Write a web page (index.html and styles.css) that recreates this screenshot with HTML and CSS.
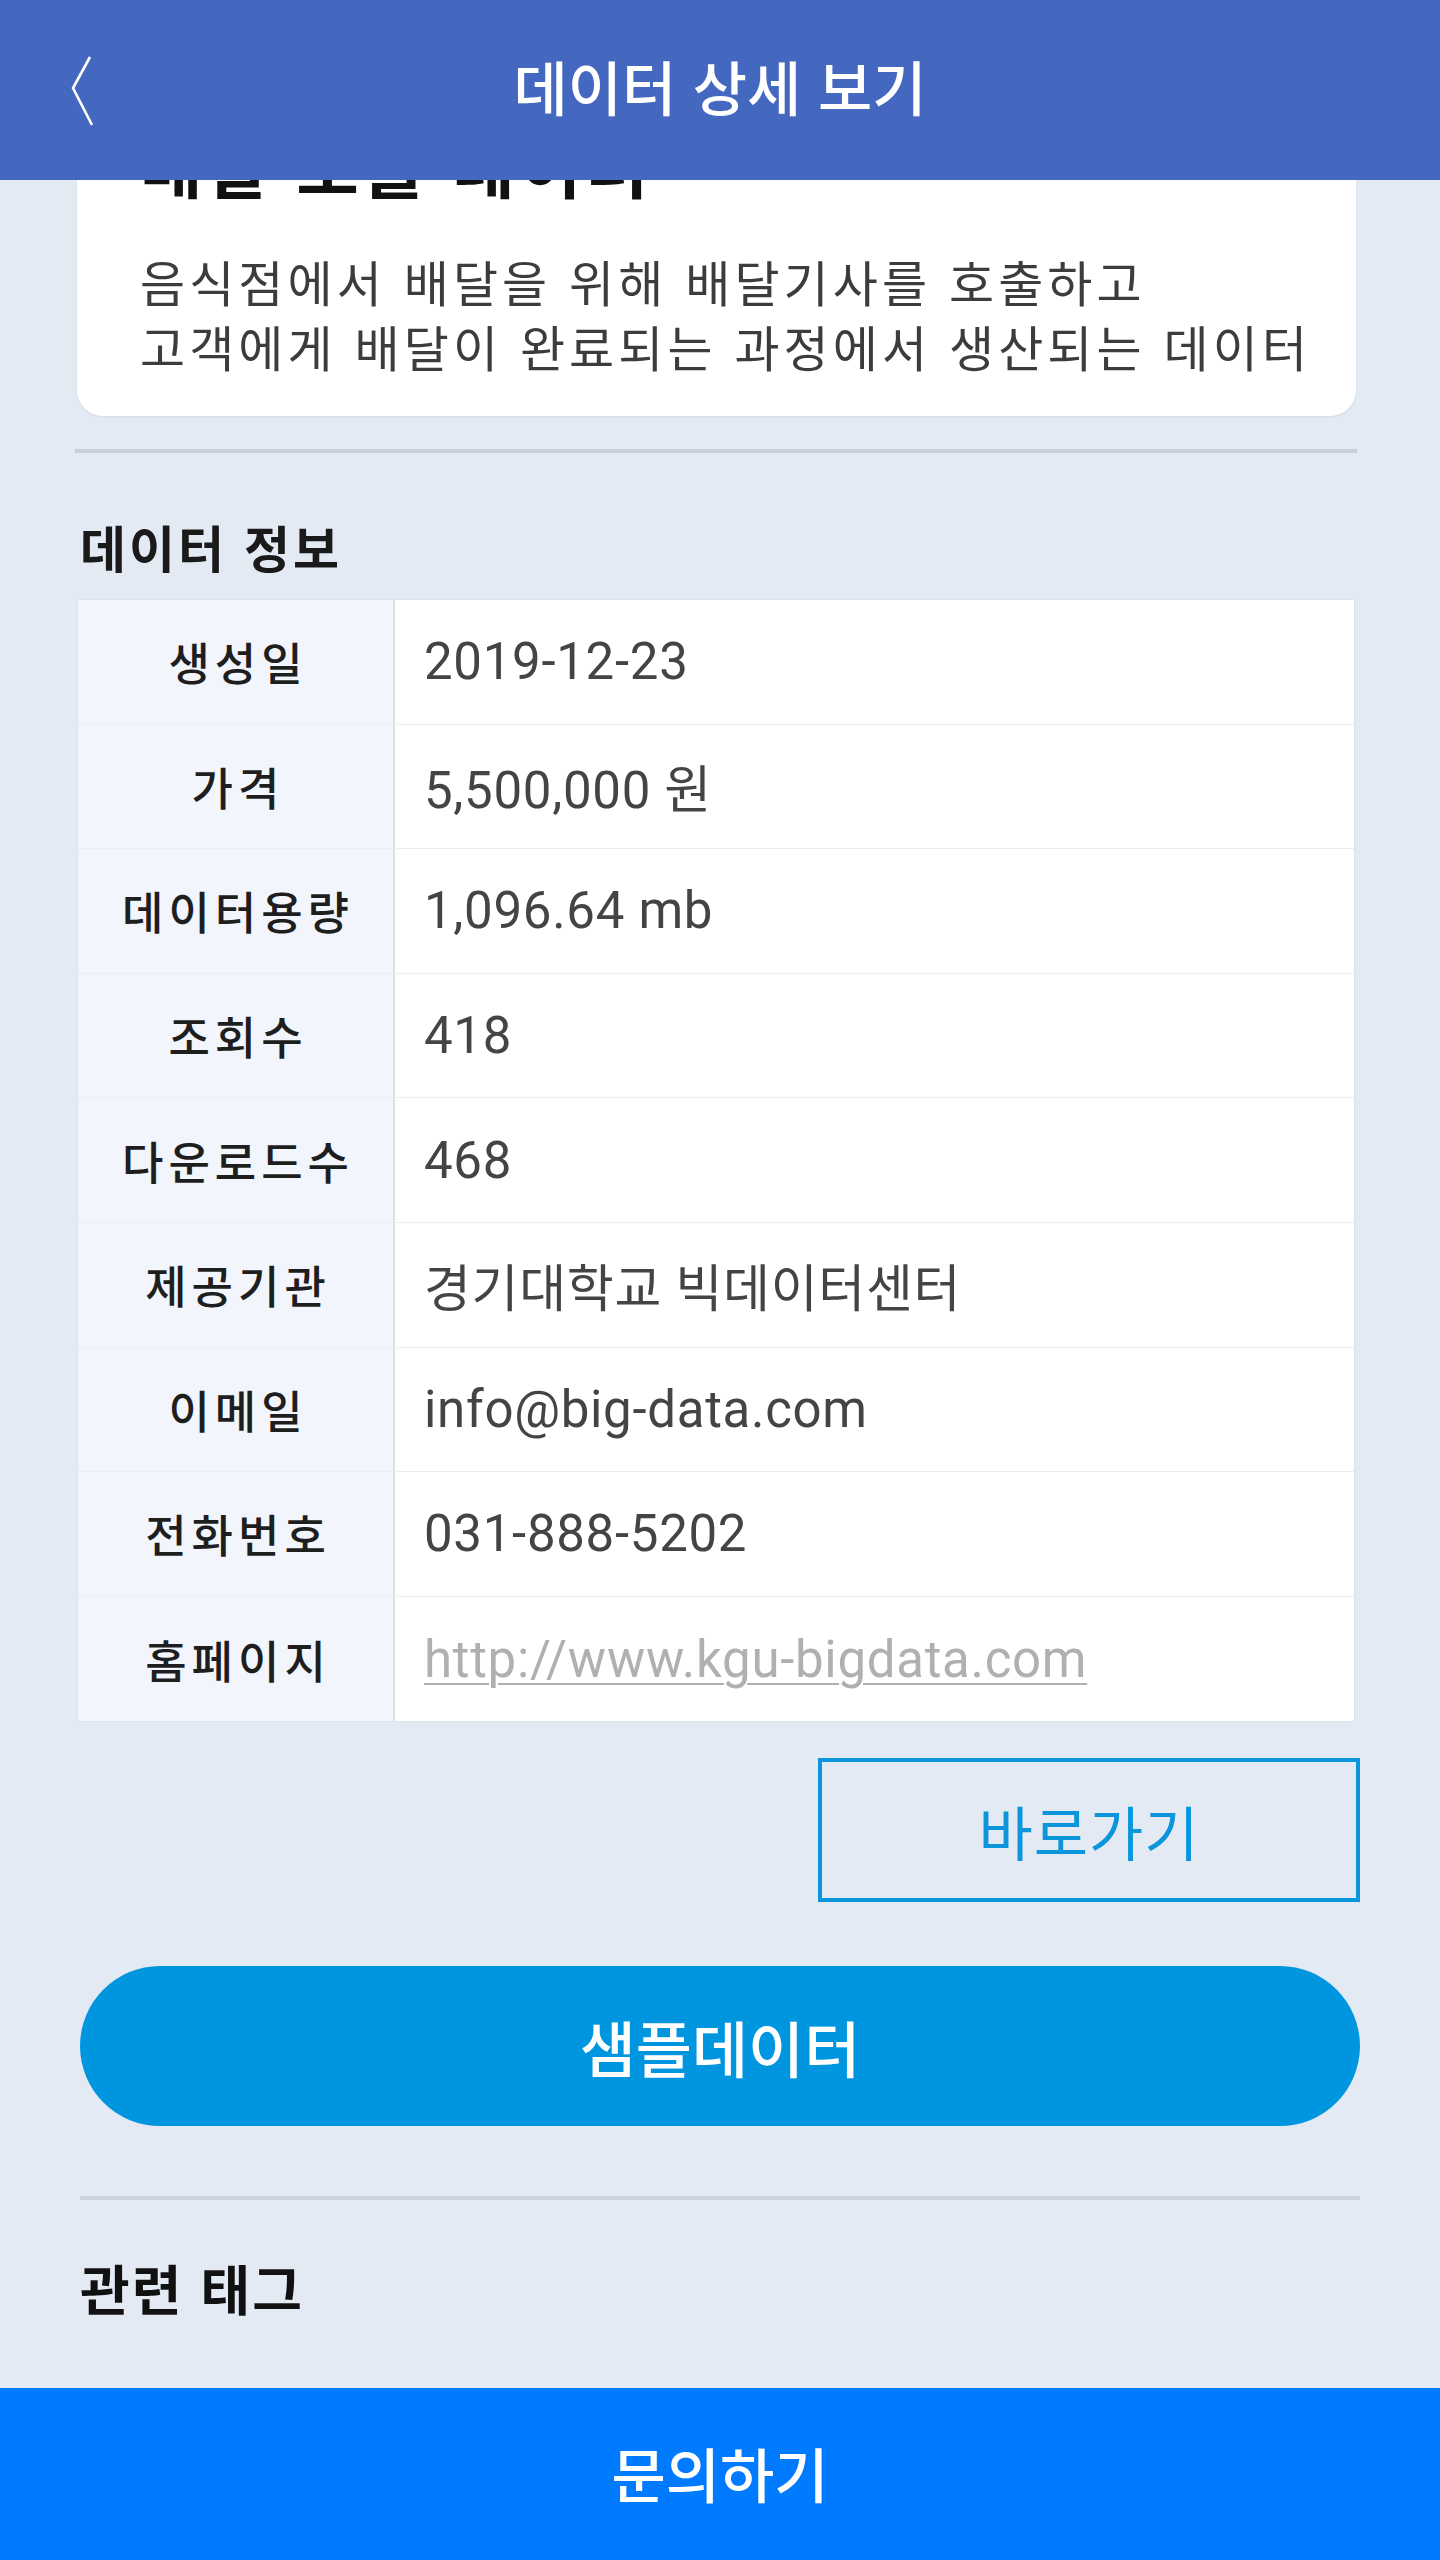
FILE: index.html
```html
<!DOCTYPE html>
<html lang="ko">
<head>
<meta charset="utf-8">
<title>데이터 상세 보기</title>
<link rel="stylesheet" href="styles.css">
</head>
<body>
<header class="topbar">
  <svg class="back" width="40" height="80" viewBox="0 0 40 80" aria-hidden="true">
    <polyline points="24,7 7,38 26,75" fill="none" stroke="#ffffff" stroke-width="2.6" stroke-linejoin="miter"/>
  </svg>
  <h1 class="topbar-title">데이터 상세 보기</h1>
</header>

<main class="content">
  <section class="intro-card">
    <h2 class="intro-title">배달 호출 데이터</h2>
    <p class="intro-desc">음식점에서 배달을 위해 배달기사를 호출하고<br>고객에게 배달이 완료되는 과정에서 생산되는 데이터</p>
  </section>

  <div class="divider divider-top"></div>

  <h3 class="section-title">데이터 정보</h3>
  <div class="info-table">
    <div class="row"><div class="label">생성일</div><div class="value">2019-12-23</div></div>
    <div class="row"><div class="label">가격</div><div class="value">5,500,000 원</div></div>
    <div class="row"><div class="label">데이터용량</div><div class="value">1,096.64 mb</div></div>
    <div class="row"><div class="label">조회수</div><div class="value">418</div></div>
    <div class="row"><div class="label">다운로드수</div><div class="value">468</div></div>
    <div class="row"><div class="label">제공기관</div><div class="value">경기대학교 빅데이터센터</div></div>
    <div class="row"><div class="label">이메일</div><div class="value">info@big-data.com</div></div>
    <div class="row"><div class="label">전화번호</div><div class="value">031-888-5202</div></div>
    <div class="row"><div class="label">홈페이지</div><div class="value"><a class="link" href="#">http://www.kgu-bigdata.com</a></div></div>
  </div>

  <div class="shortcut-wrap">
    <a class="shortcut" href="#">바로가기</a>
  </div>

  <a class="sample-btn" href="#">샘플데이터</a>

  <div class="divider divider-bottom"></div>

  <h3 class="section-title tags-title">관련 태그</h3>
</main>

<footer class="inquiry">문의하기</footer>
</body>
</html>
```

FILE: styles.css
```css
* { box-sizing: border-box; }

html, body {
  margin: 0;
  padding: 0;
}

body {
  width: 1440px;
  height: 2560px;
  overflow: hidden;
  background: #e3eaf4;
  font-family: "Noto Sans CJK KR", "Noto Sans", sans-serif;
  color: #222;
}

.topbar {
  position: fixed;
  top: 0;
  left: 0;
  width: 1440px;
  height: 180px;
  padding-bottom: 10px;
  background: #4467bf;
  z-index: 10;
  display: flex;
  align-items: center;
  justify-content: center;
}

.back {
  position: absolute;
  left: 66px;
  top: 50px;
}

.topbar-title {
  margin: 0;
  color: #ffffff;
  font-size: 59px;
  font-weight: 500;
  letter-spacing: 0;
}

.content {
  padding: 94px 80px 0 80px;
}

.intro-card {
  background: #ffffff;
  border-radius: 26px;
  margin: 0 4px 0 -3px;
  padding: 30px 40px 38px 63px;
  box-shadow: 0 1px 2px rgba(120, 130, 150, 0.15);
}

.intro-title {
  margin: 0 0 44px 0;
  font-size: 68px;
  line-height: 80px;
  font-weight: 700;
  color: #111;
  letter-spacing: 4px;
}

.intro-desc {
  margin: 0;
  font-size: 49px;
  line-height: 65px;
  color: #3c3c3c;
  letter-spacing: 4.1px;
  white-space: nowrap;
}

.divider {
  height: 4px;
  background: #c9ced8;
}

.divider-top {
  margin: 33px 3px 0 -5px;
}

.section-title {
  margin: 63px 0 0 0;
  font-size: 50px;
  line-height: 60px;
  font-weight: 700;
  color: #1a1a1a;
  letter-spacing: 3px;
}

.info-table {
  margin: 24px 6px 0 -2px;
  background: #ffffff;
  box-shadow: 0 0 0 1px #dde1e8;
}

.row {
  display: flex;
  height: 124.6px;
  border-bottom: 1px solid #ebedf0;
}

.row:last-child {
  border-bottom: none;
}

.label {
  width: 317px;
  flex: none;
  background: #f2f5fb;
  border-right: 2px solid #dcdfe5;
  display: flex;
  align-items: center;
  justify-content: center;
  font-size: 45px;
  font-weight: 500;
  color: #1e1e1e;
  letter-spacing: 5px;
  padding-left: 5px;
}

.value {
  flex: 1;
  display: flex;
  align-items: center;
  padding-left: 29px;
  font-family: Roboto, "Noto Sans CJK KR", sans-serif;
  font-size: 51px;
  letter-spacing: 0.7px;
  color: #444;
}

.link {
  color: #b0b0b0;
  text-decoration: underline;
  text-decoration-thickness: 2px;
  text-underline-offset: 6px;
}

.shortcut-wrap {
  display: flex;
  justify-content: flex-end;
  margin-top: 37px;
}

.shortcut {
  width: 542px;
  height: 144px;
  border: 4px solid #0b96dc;
  display: flex;
  align-items: center;
  justify-content: center;
  color: #0b96dc;
  font-size: 59px;
  text-decoration: none;
  letter-spacing: 1px;
}

.sample-btn {
  display: flex;
  align-items: center;
  justify-content: center;
  margin-top: 64px;
  height: 160px;
  border-radius: 80px;
  background: #0096df;
  color: #ffffff;
  font-size: 61px;
  font-weight: 500;
  text-decoration: none;
  letter-spacing: 0;
}

.divider-bottom {
  margin-top: 70px;
  background: #cdd1db;
}

.tags-title {
  margin-top: 55px;
  font-size: 54px;
  line-height: 66px;
  color: #111;
  letter-spacing: 2px;
}

.inquiry {
  position: fixed;
  left: 0;
  bottom: 0;
  width: 1440px;
  height: 172px;
  padding-bottom: 4px;
  background: #007bff;
  color: #ffffff;
  display: flex;
  align-items: center;
  justify-content: center;
  font-size: 59px;
  font-weight: 500;
  letter-spacing: 0;
}
```
